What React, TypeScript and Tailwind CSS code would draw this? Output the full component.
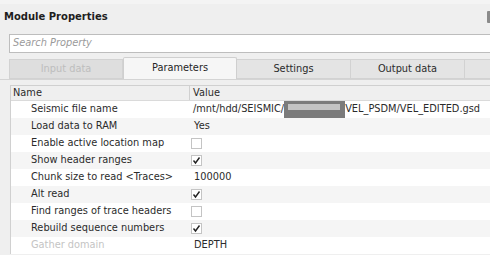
import React from 'react';

type Row = { name: string; value?: string; check?: boolean; kind: 'text' | 'check' | 'path'; disabled?: boolean };

const rows: Row[] = [
  { name: 'Seismic file name', kind: 'path' },
  { name: 'Load data to RAM', kind: 'text', value: 'Yes' },
  { name: 'Enable active location map', kind: 'check', check: false },
  { name: 'Show header ranges', kind: 'check', check: true },
  { name: 'Chunk size to read <Traces>', kind: 'text', value: '100000' },
  { name: 'Alt read', kind: 'check', check: true },
  { name: 'Find ranges of trace headers', kind: 'check', check: false },
  { name: 'Rebuild sequence numbers', kind: 'check', check: true },
  { name: 'Gather domain', kind: 'text', value: 'DEPTH', disabled: true },
];

function CheckBox({ checked }: { checked?: boolean }) {
  return (
    <div className="w-[11px] h-[11px] border border-[#c4c4c4] bg-white flex items-center justify-center">
      {checked && (
        <svg width="9" height="9" viewBox="0 0 9 9" fill="none">
          <path d="M1.5 4.5L3.5 7L7.5 1.5" stroke="#222" strokeWidth="1.4" />
        </svg>
      )}
    </div>
  );
}

const tabs = [
  { label: 'Input data', state: 'disabled' },
  { label: 'Parameters', state: 'active' },
  { label: 'Settings', state: 'normal' },
  { label: 'Output data', state: 'normal' },
  { label: '', state: 'normal' },
];

export default function App() {
  return (
    <div
      className="w-[490px] h-[255px] overflow-hidden bg-[#efefef] text-[#2b2b2b] text-[9.8px] relative"
      style={{ fontFamily: '"DejaVu Sans", Verdana, sans-serif' }}
    >
      <div className="h-[4px] bg-[#f4f4f4]" />
      {/* title */}
      <div className="flex items-center justify-between h-[25px] pl-[4px]">
        <span className="font-bold text-[10px] text-[#1e1e1e]">Module Properties</span>
        <div className="w-[3px] h-[12px] bg-[#8a8a8a] rounded-l-[1px]" />
      </div>
      {/* search */}
      <div className="ml-[9px] mt-[5px] w-[500px] h-[19px] border border-[#bdbdbd] bg-white flex items-center pl-[3px]">
        <span className="italic text-[#9a9a9a]">Search Property</span>
      </div>
      {/* tabs */}
      <div className="ml-[9px] mt-[4px] flex items-end h-[22px]">
        {tabs.map((t, i) => (
          <div
            key={i}
            className={
              t.state === 'active'
                ? 'w-[114px] h-[22px] shrink-0 flex items-center justify-center bg-[#f6f6f6] border border-b-0 border-[#cfcfcf] rounded-t-[2px] text-[#262626]'
                : t.state === 'disabled'
                ? 'w-[114px] h-[20px] shrink-0 flex items-center justify-center bg-[#dedede] border border-[#d2d2d2] text-[#bdbdbd]'
                : 'w-[114px] h-[20px] shrink-0 flex items-center justify-center bg-[#e4e4e4] border border-l-0 border-[#d2d2d2] text-[#2b2b2b]'
            }
          >
            {t.label}
          </div>
        ))}
      </div>
      {/* pane */}
      <div className="border-t border-[#d4d4d4] bg-[#efefef] pt-[5px] pl-[10px]">
        <div className="w-[500px] border-l border-t border-[#d0d0d0] bg-white">
          <div className="flex h-[15px] bg-[#efefef] border-b border-[#dadada]">
            <div className="w-[179px] pl-[2px] border-r border-[#d0d0d0] flex items-center">Name</div>
            <div className="pl-[3px] flex items-center">Value</div>
          </div>
          {rows.map((r, i) => (
            <div key={i} className={`flex h-[17px] items-center ${i % 2 === 1 ? 'bg-[#f5f5f5]' : 'bg-white'}`}>
              <div className={`w-[180px] pl-[20px] whitespace-nowrap ${r.disabled ? 'text-[#c4c4c4]' : ''}`}>{r.name}</div>
              <div className="flex items-center whitespace-nowrap">
                {r.kind === 'path' && (
                  <>
                    <span className="pl-[2px]">/mnt/hdd/SEISMIC/</span>
                    <span className="w-[61px] h-[17px] bg-[#7b7b7b] flex items-start pt-[3px] pl-[4px]">
                      <span className="w-[52px] h-[6px] bg-[#c3c3c3]" />
                    </span>
                    <span>VEL_PSDM/VEL_EDITED.gsd</span>
                  </>
                )}
                {r.kind === 'text' && <span className="pl-[3px]">{r.value}</span>}
                {r.kind === 'check' && <CheckBox checked={r.check} />}
              </div>
            </div>
          ))}
        </div>
      </div>
    </div>
  );
}
